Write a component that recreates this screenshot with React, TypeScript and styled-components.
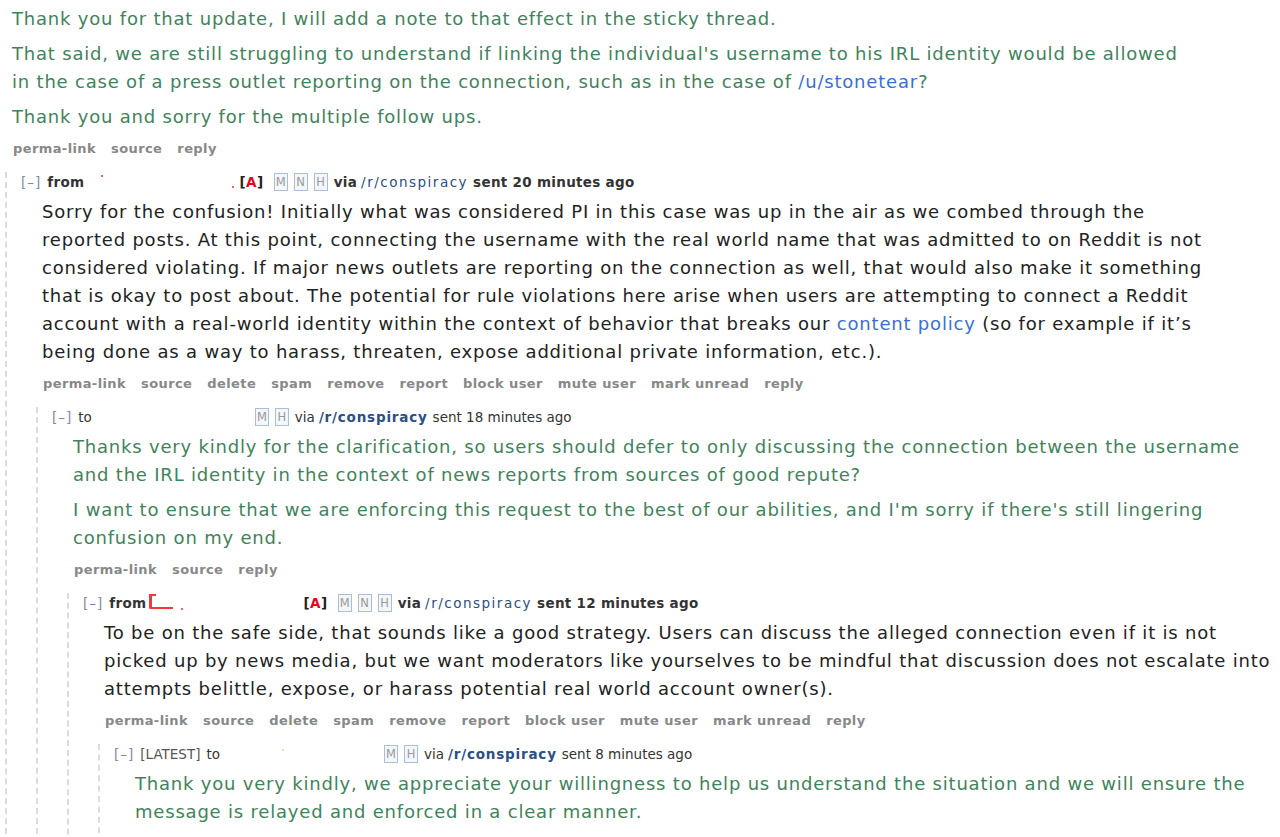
import { FC, ReactNode } from 'react'
import styled, { createGlobalStyle } from 'styled-components'

const GlobalStyle = createGlobalStyle`
  html, body {
    margin: 0;
    padding: 0;
    background: #ffffff;
    overflow: hidden;
  }
  body {
    font-family: "DejaVu Sans", Verdana, sans-serif;
  }
`

const Page = styled.div`
  padding: 5px 0 0 5px;
  height: 837px;
  box-sizing: border-box;
  overflow: hidden;
`

const RootBody = styled.div`
  padding-left: 7px;
`

const Body = styled.div<{ $mine?: boolean; $indent?: number }>`
  margin-left: ${(p) => p.$indent ?? 21}px;
  max-width: 1178px;
  font-size: 18px;
  letter-spacing: 0.8px;
  line-height: 28px;
  color: ${(p) => (p.$mine ? '#3f835c' : '#222222')};
  p {
    margin: 0 0 7px;
  }
  p:last-child {
    margin-bottom: 0;
  }
`

const Link = styled.a`
  color: #3a6fd8;
  text-decoration: none;
`

const Actions = styled.ul<{ $indent?: number }>`
  list-style: none;
  display: flex;
  gap: 15px;
  margin: 8px 0 0 ${(p) => p.$indent ?? 21}px;
  padding: 0 0 0 1px;
  font-size: 13px;
  letter-spacing: 0.4px;
  line-height: 20px;
  font-weight: bold;
  color: #888888;
  white-space: nowrap;
`

const Message = styled.div`
  border-left: 2px dashed #dcdcdc;
  padding-left: 14px;
  margin-top: 13px;
`

const Children = styled.div`
  margin-left: 15px;
`

const Header = styled.div<{ $unread?: boolean }>`
  display: flex;
  align-items: center;
  font-size: 13.5px;
  line-height: 20px;
  height: 20px;
  color: #333333;
  white-space: nowrap;
  font-weight: ${(p) => (p.$unread ? 'bold' : 'normal')};
  letter-spacing: ${(p) => (p.$unread ? '0.3px' : '0')};
  margin-bottom: 6px;
`

const Toggle = styled.span`
  color: #7d88a8;
  font-weight: normal;
  letter-spacing: 1px;
  margin-right: 6px;
`

const Tag = styled.span`
  color: #555555;
  font-weight: normal;
  margin-right: 6px;
`

const Redacted = styled.span<{ $width: number }>`
  position: relative;
  display: inline-block;
  width: ${(p) => p.$width}px;
  height: 20px;
`

const Mark = styled.span<{ $x: number; $y: number; $w: number; $h: number; $color?: string }>`
  position: absolute;
  left: ${(p) => p.$x}px;
  top: ${(p) => p.$y}px;
  width: ${(p) => p.$w}px;
  height: ${(p) => p.$h}px;
  background: ${(p) => p.$color ?? '#f03030'};
  border-radius: 1px;
`

const Bracket = styled.span`
  position: absolute;
  left: 3px;
  top: 1px;
  width: 24px;
  height: 15px;
  border-left: 3px solid #f03a3a;
  border-bottom: 2px solid #f03a3a;
  border-bottom-left-radius: 2px;
  box-sizing: border-box;
  &::before {
    content: '';
    position: absolute;
    left: 0;
    top: 0;
    width: 4px;
    height: 2px;
    background: #f03a3a;
  }
`

const Admin = styled.span`
  font-weight: bold;
  color: #222222;
  letter-spacing: 0.5px;
  margin-right: 10px;
  em {
    font-style: normal;
    color: #e8001c;
  }
`

const Badge = styled.span`
  display: inline-flex;
  align-items: center;
  justify-content: center;
  width: 12px;
  height: 16px;
  border: 1px solid #a9bfd8;
  background: #f3f6fa;
  color: #9a9a9a;
  font-size: 11.5px;
  font-weight: normal;
  letter-spacing: 0;
  margin-right: 6px;
  box-sizing: content-box;
`

const Via = styled.span`
  margin-right: 4px;
`

const Sub = styled.a<{ $bold?: boolean }>`
  color: #2b4f86;
  text-decoration: none;
  font-weight: ${(p) => (p.$bold ? 'bold' : 'normal')};
  letter-spacing: ${(p) => (p.$bold ? '0.8px' : '1.5px')};
  margin-right: 5px;
`

interface HeaderProps {
  unread?: boolean
  latest?: boolean
  dir: 'from' | 'to'
  nameWidth: number
  marks?: ReactNode
  admin?: boolean
  badges: string[]
  ago: string
}

const MessageHeader: FC<HeaderProps> = ({ unread, latest, dir, nameWidth, marks, admin, badges, ago }) => (
  <Header $unread={unread}>
    <Toggle>[–]</Toggle>
    {latest && <Tag>[LATEST]</Tag>}
    <span>{dir}</span>
    <Redacted $width={nameWidth}>{marks}</Redacted>
    {admin && (
      <Admin>
        [<em>A</em>]
      </Admin>
    )}
    {badges.map((b) => (
      <Badge key={b}>{b}</Badge>
    ))}
    <Via>via</Via>
    <Sub href="#" $bold={!unread}>
      /r/conspiracy
    </Sub>
    <span>sent {ago}</span>
  </Header>
)

const ActionList: FC<{ items: string[]; indent?: number }> = ({ items, indent }) => (
  <Actions $indent={indent}>
    {items.map((a) => (
      <li key={a}>{a}</li>
    ))}
  </Actions>
)

const mine = ['perma-link', 'source', 'reply']
const theirs = [
  'perma-link',
  'source',
  'delete',
  'spam',
  'remove',
  'report',
  'block user',
  'mute user',
  'mark unread',
  'reply',
]

const App: FC = () => {
  return (
    <Page>
      <GlobalStyle />
      <RootBody>
        <Body $mine $indent={0}>
          <p>Thank you for that update, I will add a note to that effect in the sticky thread.</p>
          <p>
            That said, we are still struggling to understand if linking the individual's username to his IRL identity
            would be allowed in the case of a press outlet reporting on the connection, such as in the case of{' '}
            <Link href="#">/u/stonetear</Link>?
          </p>
          <p>Thank you and sorry for the multiple follow ups.</p>
        </Body>
        <ActionList items={mine} indent={0} />
      </RootBody>

      <Message>
        <MessageHeader
          unread
          dir="from"
          nameWidth={155}
          admin
          badges={['M', 'N', 'H']}
          ago="20 minutes ago"
          marks={
            <>
              <Mark $x={17} $y={3} $w={2} $h={2} />
              <Mark $x={148} $y={14} $w={2} $h={2} />
            </>
          }
        />
        <Body>
          <p>
            Sorry for the confusion! Initially what was considered PI in this case was up in the air as we combed through
            the reported posts. At this point, connecting the username with the real world name that was admitted to on
            Reddit is not considered violating. If major news outlets are reporting on the connection as well, that would
            also make it something that is okay to post about. The potential for rule violations here arise when users
            are attempting to connect a Reddit account with a real-world identity within the context of behavior that
            breaks our <Link href="#">content policy</Link> (so for example if it’s being done as a way to harass,
            threaten, expose additional private information, etc.).
          </p>
        </Body>
        <ActionList items={theirs} />

        <Children>
          <Message>
            <MessageHeader dir="to" nameWidth={163} badges={['M', 'H']} ago="18 minutes ago" />
            <Body $mine>
              <p>
                Thanks very kindly for the clarification, so users should defer to only discussing the connection
                between the username and the IRL identity in the context of news reports from sources of good repute?
              </p>
              <p>
                I want to ensure that we are enforcing this request to the best of our abilities, and I'm sorry if
                there's still lingering confusion on my end.
              </p>
            </Body>
            <ActionList items={mine} />

            <Children>
              <Message>
                <MessageHeader
                  unread
                  dir="from"
                  nameWidth={157}
                  admin
                  badges={['M', 'N', 'H']}
                  ago="12 minutes ago"
                  marks={
                    <>
                      <Bracket />
                      <Mark $x={35} $y={15} $w={2} $h={2} />
                    </>
                  }
                />
                <Body>
                  <p>
                    To be on the safe side, that sounds like a good strategy. Users can discuss the alleged connection
                    even if it is not picked up by news media, but we want moderators like yourselves to be mindful that
                    discussion does not escalate into attempts belittle, expose, or harass potential real world account
                    owner(s).
                  </p>
                </Body>
                <ActionList items={theirs} />

                <Children>
                  <Message>
                    <MessageHeader
                      latest
                      dir="to"
                      nameWidth={164}
                      badges={['M', 'H']}
                      ago="8 minutes ago"
                      marks={<Mark $x={62} $y={5} $w={2} $h={2} $color="#f3d9a8" />}
                    />
                    <Body $mine>
                      <p>
                        Thank you very kindly, we appreciate your willingness to help us understand the situation and we
                        will ensure the message is relayed and enforced in a clear manner.
                      </p>
                    </Body>
                    <ActionList items={mine} />
                  </Message>
                </Children>
              </Message>
            </Children>
          </Message>
        </Children>
      </Message>
    </Page>
  )
}

export default App
